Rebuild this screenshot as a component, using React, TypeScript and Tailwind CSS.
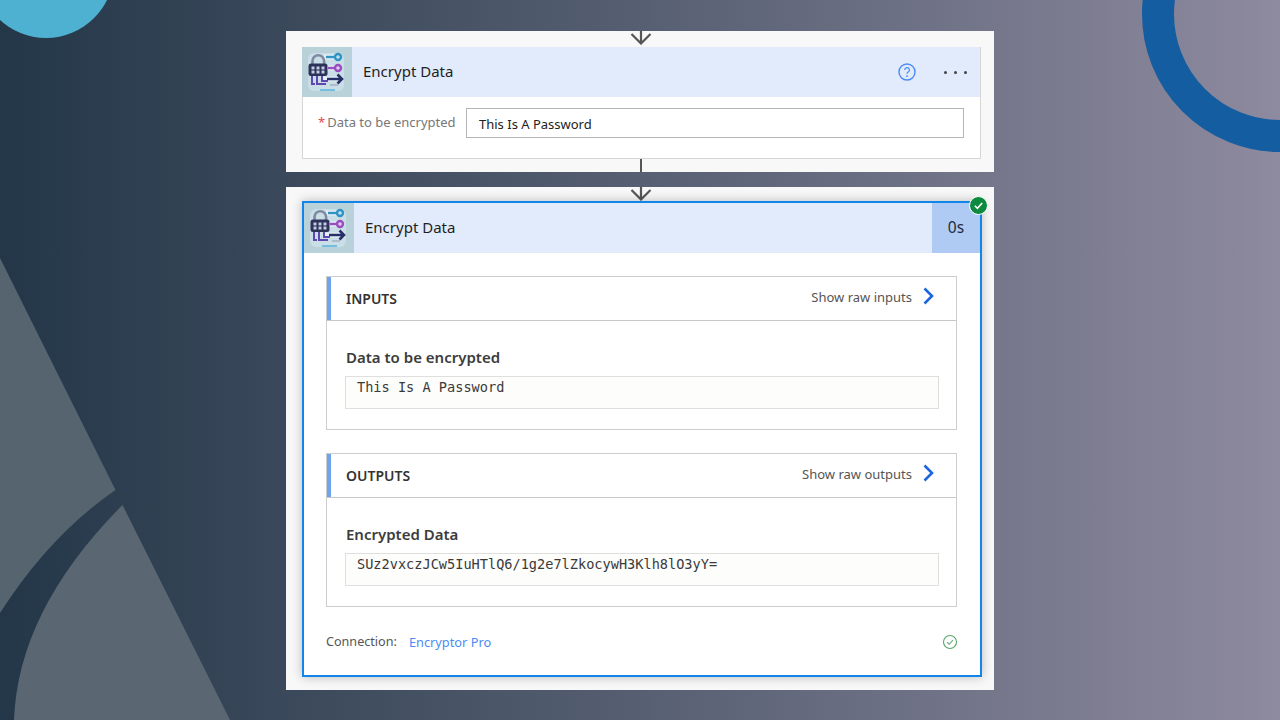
import React from "react";

const FONT = "font-['Noto_Sans','Liberation_Sans',sans-serif]";
const MONO = "font-['DejaVu_Sans_Mono','Liberation_Mono',monospace]";

function Backdrop() {
  return (
    <svg className="absolute left-0 top-0" width="1280" height="720" viewBox="0 0 1280 720" aria-hidden="true">
      <circle cx="46" cy="-30" r="68" fill="#4fb1d1" />
      <circle cx="1280" cy="14" r="122" fill="none" stroke="#155da1" strokeWidth="32" />
      <path d="M0 258 L115.5 490 Q50 535 0 613 Z" fill="#566470" />
      <path d="M122.5 505 Q18 610 14 720 L230 720 Z" fill="#5a6773" />
    </svg>
  );
}

function FlowArrow() {
  return (
    <svg width="24" height="14" viewBox="0 0 24 14" className="block ml-[2px]" aria-hidden="true">
      <path d="M12 0 V12.5 M2.5 3 L12 12.5 L21.5 3" fill="none" stroke="#555" strokeWidth="2.2" />
    </svg>
  );
}

function ActionIcon() {
  return (
    <svg width="50" height="50" viewBox="0 0 50 50" className="block shrink-0 blur-[0.4px]" aria-hidden="true">
      <rect width="50" height="50" fill="#b9d2da" />
      <rect x="6" y="6" width="36" height="38" rx="6" fill="#c9dee6" />
      {/* halo under the lines */}
      <path d="M22 10 H38 M23 21 H38 M20 32 H41" stroke="#e4f0f6" strokeWidth="5" fill="none" />
      {/* shackle */}
      <path d="M10.500 18 V14 a5.800 5.800 0 0 1 11.600 0 V18" fill="none" stroke="#7f8aa2" strokeWidth="2.600" />
      {/* lock body */}
      <rect x="6.500" y="16.500" width="19" height="12.500" rx="2.500" fill="#2d3259" />
      <path d="M9.500 19.500 h3 v7 h-3 z M14.500 19.500 h3 v7 h-3 z M19.500 19.500 h3 v7 h-3 z" fill="#c3cce0" />
      <path d="M9 23 h14" stroke="#2d3259" strokeWidth="1.100" />
      {/* key lines */}
      <path d="M24 10 H33" stroke="#2f93c4" strokeWidth="2.400" />
      <circle cx="36" cy="10" r="3" fill="#bfe2f0" stroke="#2f93c4" strokeWidth="2.400" />
      <path d="M26 21 H33" stroke="#9a4dc0" strokeWidth="2.400" />
      <circle cx="36" cy="21" r="3" fill="#e3cdee" stroke="#9a4dc0" strokeWidth="2.400" />
      <path d="M25 32 H39 M35.500 27.500 L40 32 L35.500 36.500" fill="none" stroke="#262f66" strokeWidth="2.600" />
      {/* lower tails */}
      <path d="M10 29 V37 H13 M15 29 V37 H24 M20 29 V34 H26" fill="none" stroke="#5f48b2" strokeWidth="2" />
      <path d="M28 38 h8" stroke="#8f9bb0" strokeWidth="1" />
      <path d="M18 43 H33" stroke="#4aaedd" strokeWidth="1.300" />
    </svg>
  );
}

function Chevron() {
  return (
    <svg width="14" height="18" viewBox="0 0 14 18" className="block" aria-hidden="true">
      <path d="M2.500 1.500 L10 9 L2.500 16.500" fill="none" stroke="#1a66e0" strokeWidth="2.600" />
    </svg>
  );
}

function Section({ title, rawLabel, label, value }: { title: string; rawLabel: string; label: string; value: string }) {
  return (
    <section className="border border-[#cdcdcd] bg-white w-[631px] h-[154px] flex flex-col">
      <div className="h-[44px] shrink-0 flex items-center border-b border-[#c8c8c8]">
        <div className="w-[4px] h-full bg-[#6fa3ec] shrink-0" />
        <span className="ml-[15px] text-[14px] leading-none font-semibold text-[#333]">{title}</span>
        <span className="ml-auto -mt-[2px] text-[13px] text-[#555]">{rawLabel}</span>
        <span className="ml-[10px] mr-[20px] -mt-[5px]">
          <Chevron />
        </span>
      </div>
      <div className="pl-[18px] pr-[17px] pt-[26px]">
        <div className="text-[15px] leading-[20px] font-semibold text-[#3c3c3c] pl-[1px]">{label}</div>
        <div className={`mt-[9px] h-[33px] border border-[#dfdfdf] bg-[#fdfdfb] pl-[11px] pt-px text-[13.600px] leading-[18px] text-[#3a3a3a] ${MONO}`}>
          {value}
        </div>
      </div>
    </section>
  );
}

export default function App() {
  return (
    <div className={`relative w-[1280px] h-[720px] overflow-hidden bg-linear-to-r from-[#233748] to-[#8e8a9f] ${FONT}`}>
      <Backdrop />
      <div className="relative flex flex-col items-center pt-[31px]">
        {/* Configured action */}
        <div className="w-[708px] h-[141px] bg-[#f8f8f8] flex flex-col">
          <div className="h-[16px] flex justify-center">
            <FlowArrow />
          </div>
          <div className="ml-[16px] w-[679px] h-[112px] border border-[#d6d6d6] bg-white flex flex-col">
            <div className="h-[50px] -mt-px -ml-px shrink-0 bg-[#e1ebfb] flex items-center">
              <ActionIcon />
              <span className="ml-[11px] -mt-px text-[15px] text-[#1f1f1f]">Encrypt Data</span>
              <svg width="20" height="20" viewBox="0 0 20 20" className="ml-auto block" aria-hidden="true">
                <circle cx="10" cy="10" r="8" fill="none" stroke="#4d8cf5" strokeWidth="1.400" />
                <path d="M7.800 8 a2.300 2.300 0 1 1 3.400 2 c-.9.500-1.200 1-1.200 1.800" fill="none" stroke="#4d8cf5" strokeWidth="1.300" />
                <circle cx="10" cy="14.200" r="0.900" fill="#4d8cf5" />
              </svg>
              <div className="ml-[27px] mr-[13px] flex gap-[7px]">
                <span className="w-[3px] h-[3px] rounded-full bg-[#444]" />
                <span className="w-[3px] h-[3px] rounded-full bg-[#444]" />
                <span className="w-[3px] h-[3px] rounded-full bg-[#444]" />
              </div>
            </div>
            <div className="flex pt-[11px]">
              <span className="ml-[15px] w-[148px] flex text-[13px] leading-[28px] text-[#777]">
                <span className="text-[#e5484d] mr-[2px]">*</span>Data to be encrypted
              </span>
              <div className="w-[498px] h-[30px] border border-[#b5b5b5] pl-[12px] text-[13px] leading-[30px] text-[#222]">
                This Is A Password
              </div>
            </div>
          </div>
          <div className="flex-1 flex justify-center">
            <div className="ml-[2px] w-[2px] h-full bg-[#555]" />
          </div>
        </div>

        {/* Run result */}
        <div className="mt-[15px] w-[708px] h-[503px] bg-[#f8f8f8] flex flex-col">
          <div className="h-[14px] flex justify-center">
            <FlowArrow />
          </div>
          <div className="relative ml-[16px] w-[680px] h-[476px] border-2 border-[#1186e8] bg-white shadow-[0_0_10px_rgba(0,0,0,0.25)]">
            <div className="h-[50px] bg-[#e1ebfb] flex items-center">
              <ActionIcon />
              <span className="ml-[11px] -mt-px text-[15px] text-[#1f1f1f]">Encrypt Data</span>
              <span className="ml-auto w-[48px] h-full bg-[#b0cbf3] flex items-center justify-center text-[15.500px] text-[#1f2a3d]">
                0s
              </span>
            </div>
            <div className="pl-[22px] pt-[23px] flex flex-col gap-[23px]">
              <Section title="INPUTS" rawLabel="Show raw inputs" label="Data to be encrypted" value="This Is A Password" />
              <Section
                title="OUTPUTS"
                rawLabel="Show raw outputs"
                label="Encrypted Data"
                value="SUz2vxczJCw5IuHTlQ6/1g2e7lZkocywH3Klh8lO3yY="
              />
            </div>
            <div className="ml-[22px] mr-[22px] mt-[26px] flex items-center">
              <span className="text-[12.600px] text-[#555]">Connection:</span>
              <span className="ml-[12px] text-[12.800px] text-[#4d8cf5]">Encryptor Pro</span>
              <svg width="16" height="16" viewBox="0 0 16 16" className="ml-auto block -mt-px" aria-hidden="true">
                <circle cx="8" cy="8" r="6.500" fill="none" stroke="#5aa469" strokeWidth="1.100" />
                <path d="M5 8.200 L7.200 10.300 L11 6" fill="none" stroke="#5aa469" strokeWidth="1.100" />
              </svg>
            </div>
            <div className="absolute -top-[7px] -right-[8px] w-[19px] h-[19px] rounded-full bg-[#0d8a3f] border border-white flex items-center justify-center">
              <svg width="11" height="11" viewBox="0 0 12 12" className="block" aria-hidden="true">
                <path d="M2 6.300 L4.800 9 L10 3.200" fill="none" stroke="#fff" strokeWidth="1.800" />
              </svg>
            </div>
          </div>
        </div>
      </div>
    </div>
  );
}
